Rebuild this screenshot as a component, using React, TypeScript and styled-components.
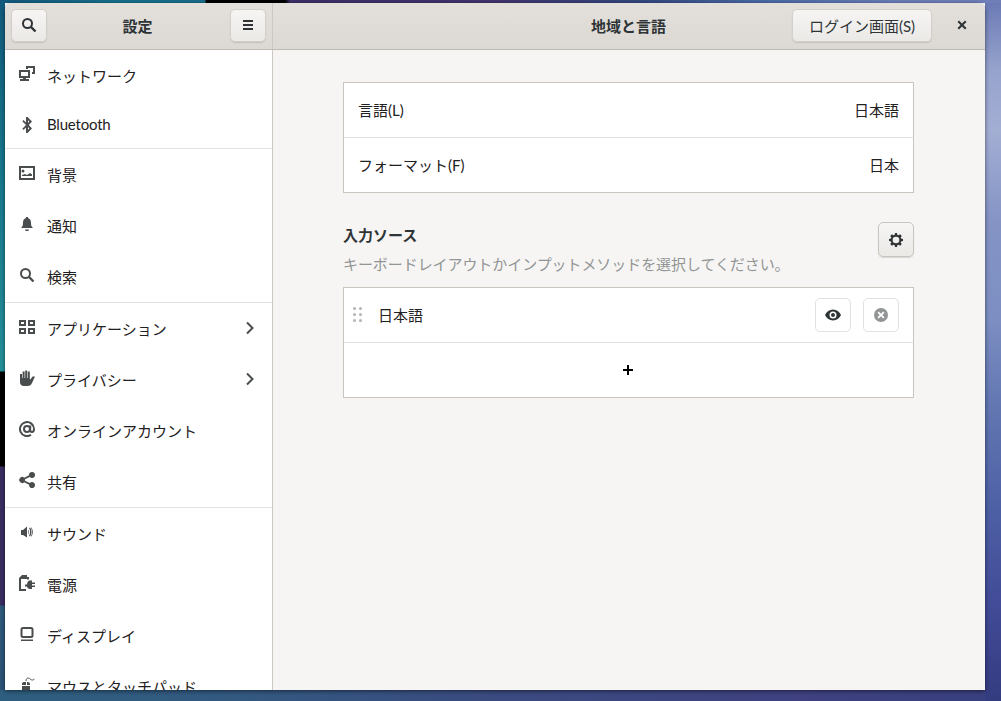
import React from 'react';
import styled, { createGlobalStyle } from 'styled-components';

const GlobalStyle = createGlobalStyle`
  html, body {
    margin: 0;
    padding: 0;
    overflow: hidden;
  }
  body {
    font-family: Lato, "Noto Sans CJK JP", sans-serif;
    font-size: 15px;
    color: #2e3436;
  }
`;

const Desktop = styled.div`
  box-sizing: border-box;
  width: 1001px;
  height: 701px;
  padding: 3px 16px 11px 5px;
  background:
    linear-gradient(90deg, #13597c 0, #17708c 120px, #1a6f8c 205px, #000 206px, #000 285px, #3d2f68 290px, #40356e 500px, #33477f 640px, #4a6aa6 760px, #6b7eb9 900px, #717fb8 1001px) top / 100% 3px no-repeat,
    linear-gradient(180deg, #6a79b4 0, #96a3cd 70px, #a3aed3 130px, #8594c5 220px, #7c8ec2 320px, #6478b3 400px, #4f62a6 500px, #424c98 600px, #343c80 701px) right / 16px 100% no-repeat,
    linear-gradient(90deg, #2e5e7f 0, #33587f 250px, #3a4a80 500px, #3f4180 800px, #38407f 1001px) bottom / 100% 11px no-repeat,
    linear-gradient(180deg, #125a7c 0, #187a8f 180px, #24919a 371px, #000 372px, #000 466px, #3a2d60 467px, #3a2d60 605px, #2f5a7d 606px, #2c5278 701px) left / 5px 100% no-repeat;
`;

const Window = styled.div`
  display: flex;
  flex-direction: column;
  height: 100%;
  overflow: hidden;
  border-radius: 8px 8px 0 0;
  background: #f6f5f4;
  box-shadow: 0 1px 4px rgba(0, 0, 0, 0.55);
`;

const TitleBar = styled.header`
  display: flex;
  flex: none;
  height: 46px;
  background: linear-gradient(180deg, #e3e0dc, #dcd9d5);
  border-bottom: 1px solid #bfb9b3;
`;

const SideHeader = styled.div`
  box-sizing: border-box;
  display: grid;
  grid-template-columns: 36px 1fr 36px;
  align-items: center;
  flex: none;
  width: 268px;
  padding: 0 6px 2px;
  border-right: 1px solid #cdc8c2;
`;

const MainHeader = styled.div`
  display: grid;
  grid-template-columns: 1fr auto 1fr;
  align-items: center;
  flex: 1;
  padding: 0 5px 2px 6px;
`;

const HeaderTitle = styled.h1`
  margin: 2px 2px 0 0;
  font-size: 15px;
  font-weight: 700;
  line-height: 20px;
  text-align: center;
  color: #2e3436;
`;

const HeaderEnd = styled.div`
  display: flex;
  justify-content: flex-end;
  align-items: center;
  gap: 12px;
`;

const ToolButton = styled.button<{ $wide?: boolean }>`
  box-sizing: border-box;
  display: flex;
  align-items: center;
  justify-content: center;
  width: ${(p) => (p.$wide ? '140px' : '36px')};
  height: 33px;
  padding: 0;
  border: 1px solid #d3cfca;
  border-radius: 5px;
  background: linear-gradient(180deg, #f6f5f4, #ebe9e6);
  box-shadow: 0 1px 1px rgba(0, 0, 0, 0.12);
  font: inherit;
  color: #2e3436;
`;

const CloseButton = styled.button`
  display: flex;
  align-items: center;
  justify-content: center;
  width: 36px;
  height: 33px;
  padding: 0;
  border: none;
  background: none;
  color: #2e3436;
`;

const Body = styled.div`
  display: flex;
  flex: 1;
  min-height: 0;
`;

const Sidebar = styled.nav`
  box-sizing: border-box;
  flex: none;
  width: 268px;
  overflow: hidden;
  background: #fff;
  border-right: 1px solid #cdc8c2;
`;

const NavGroup = styled.div`
  border-bottom: 1px solid #e4e3e1;
  &:last-child {
    border-bottom: none;
  }
`;

const NavRow = styled.div<{ $short?: boolean }>`
  display: flex;
  align-items: center;
  gap: 12px;
  height: ${(p) => (p.$short ? '47px' : '51px')};
  padding: 0 14px;
  color: #1f2122;
  line-height: 20px;
`;

const NavIcon = styled.svg<{ $short?: boolean }>`
  flex: none;
  width: 16px;
  height: 16px;
  margin-top: ${(p) => (p.$short ? '0' : '-3px')};
  fill: #4a4d4e;
  color: #4a4d4e;
`;

const NavLabel = styled.span<{ $short?: boolean }>`
  flex: 1;
  white-space: nowrap;
  margin-top: ${(p) => (p.$short ? '-2px' : '0')};
  letter-spacing: ${(p) => (p.$short ? '-0.2px' : '0')};
`;

const Chevron = styled.svg`
  flex: none;
  width: 16px;
  height: 16px;
  margin: -1px 0 0;
  fill: none;
  stroke: #4a4d4e;
  stroke-width: 2;
`;

const Content = styled.main`
  flex: 1;
  display: flex;
  flex-direction: column;
  padding: 32px 71px 0 70px;
`;

const ListBox = styled.div`
  background: #fff;
  border: 1px solid #c9c5be;
`;

const ListRow = styled.div`
  display: flex;
  align-items: center;
  justify-content: space-between;
  box-sizing: border-box;
  height: 55px;
  padding: 0 14px;
  line-height: 20px;
  color: #1f2122;
  border-bottom: 1px solid #e4e3e1;
  &:last-child {
    height: 54px;
    border-bottom: none;
  }
`;

const SourceRow = styled(ListRow)`
  justify-content: flex-start;
  padding: 0 14px 0 9px;
`;

const AddRow = styled(ListRow)`
  justify-content: center;
  padding: 0 15px 0 14px;
`;

const Section = styled.section`
  display: flex;
  justify-content: space-between;
  align-items: flex-start;
  margin: 29px 0 9px;
  height: 56px;
`;

const SectionTitle = styled.h2`
  margin: 3px 0 9px;
  font-size: 15px;
  font-weight: 700;
  line-height: 20px;
  color: #2e3436;
`;

const SectionHint = styled.p`
  margin: 0;
  font-size: 15px;
  line-height: 20px;
  letter-spacing: -0.07px;
  color: #929595;
`;

const GearButton = styled(ToolButton)`
  height: 35px;
  border-color: #c9c5be;
`;

const DragHandle = styled.div`
  display: grid;
  grid-template-columns: 3px 3px;
  grid-auto-rows: 3px;
  gap: 3px 3px;
  margin-right: 16px;
  margin-top: -2px;
`;

const Dot = styled.i`
  display: block;
  border-radius: 50%;
  background: #b4b4b4;
`;

const SourceName = styled.span`
  flex: 1;
`;

const RowButton = styled.button`
  box-sizing: border-box;
  display: flex;
  align-items: center;
  justify-content: center;
  width: 36px;
  height: 34px;
  margin-left: 12px;
  padding: 0;
  border: 1px solid #e3e2df;
  border-radius: 5px;
  background: #fff;
`;

const Glyph = styled.svg<{ $color?: string; $size?: number }>`
  width: ${(p) => p.$size ?? 16}px;
  height: ${(p) => p.$size ?? 16}px;
  fill: ${(p) => p.$color ?? '#2e3436'};
`;

const searchIcon = (
  <>
    <circle cx="6.500" cy="6.500" r="4.500" fill="none" stroke="currentColor" strokeWidth="2" />
    <path d="M10 10l4.500 4.500" fill="none" stroke="currentColor" strokeWidth="2.400" />
  </>
);

const icons = {
  network: (
    <>
      <path d="M7 0h9v8h-3V6h1V2H9v1H7z" />
      <path d="M0 4h11v8H7v1h3v2H1v-2h3v-1H0zm2 2v4h7V6z" />
    </>
  ),
  bluetooth: (
    <path d="M7 0h1.500L13 4.500 9.800 8l3.200 3.500L8.500 16H7v-5.500L4.500 13 3.300 11.700 7 8 3.300 4.300 4.500 3 7 5.500zm2 3.300v2.600l1.300-1.400zm0 6.800v2.600l1.300-1.200z" fillRule="evenodd" />
  ),
  background: (
    <path d="M0 1h16v14H0zm2 2v10h12V3zm2 1.500a1.500 1.500 0 1 1 0 3 1.500 1.500 0 0 1 0-3zM3 11v-1l3-1 2 1 3-2 2 1.500V11z" fillRule="evenodd" />
  ),
  bell: (
    <path d="M8 1c.8 0 1.300.5 1.400 1.200C11.500 3 12 4.800 12 7c0 2.500.6 3.500 2 5H2c1.400-1.500 2-2.500 2-5 0-2.200.5-4 2.600-4.800C6.700 1.500 7.200 1 8 1zM6 13.500h4c0 1-.9 1.500-2 1.500s-2-.5-2-1.500z" />
  ),
  search: searchIcon,
  apps: (
    <path d="M0 1h7v6H0zm2 2v2h3V3zm7-2h7v6H9zm2 2v2h3V3zM0 9h7v6H0zm2 2v2h3v-2zm7-2h7v6H9zm2 2v2h3v-2z" fillRule="evenodd" />
  ),
  hand: (
    <path d="M1 4h2v4h.6V1.500h2V8h.6V.5h2V8h.6V1.500h2V9l.6.500L13.500 6.500H16L13 13c-.8 2-2.200 3-4.500 3H5c-2.500 0-4-1.500-4-4z" />
  ),
  at: (
    <>
      <path d="M12 13.800A7 7 0 1 1 15 8c0 2-.8 3-2 3s-1.800-.8-1.800-2V4.500" fill="none" stroke="currentColor" strokeWidth="2" />
      <circle cx="8" cy="8" r="3" fill="none" stroke="currentColor" strokeWidth="2" />
    </>
  ),
  share: (
    <path d="M13 0a3 3 0 1 1-2.200 5L6 7.300a3 3 0 0 1 0 1.400l4.800 2.300A3 3 0 1 1 10 13v-.3L5.200 10.300a3 3 0 1 1 0-4.600L10 3.300V3a3 3 0 0 1 3-3z" />
  ),
  sound: (
    <>
      <path d="M2 6h2l4-3.500v11L4 11H2z" />
      <path d="M9 5.500c1 1.700 1 3.300 0 5zM11 3.500c2 2.900 2 6.100 0 9l-1-.6c1.500-2.600 1.500-5.200 0-7.800z" />
      <path d="M12.500 3.500c1.800 2.900 1.800 6.100 0 9l-.6-.3c1.500-2.800 1.500-5.600 0-8.400z" />
    </>
  ),
  power: (
    <>
      <path d="M3 0h5v2h2v2.500H8V4H2v10h5v2H0V3z" />
      <path d="M11 5.500h2v2h3v1.500h-3v1.500h3V12h-3v2h-2c-1.600 0-2.800-1-3-2.500H6v-2h2C8.200 7 9.400 5.500 11 5.500z" />
    </>
  ),
  display: (
    <path d="M4 1h8a2.500 2.500 0 0 1 2.500 2.500v6A2.500 2.500 0 0 1 12 12H4a2.500 2.500 0 0 1-2.500-2.500v-6A2.500 2.500 0 0 1 4 1zm0 2c-.3 0-.5.200-.5.500v6c0 .3.200.5.500.5h8c.3 0 .5-.2.500-.5v-6c0-.3-.2-.5-.5-.5zM2 13.500h12V15H2z" fillRule="evenodd" />
  ),
  mouse: (
    <>
      <path d="M5 5h2v3H3V7c0-1.200.8-2 2-2zM8 5h.5C9.800 5 11 5.800 11 7v1H8zM3 9h8v4c0 1.800-1.200 3-3 3H6c-1.800 0-3-1.200-3-3z" />
      <path d="M7 4c0-3 2-3.500 3.500-2.500S13 4 15.500 2" fill="none" stroke="#4a4d4e" strokeWidth="1" />
    </>
  ),
};

type IconName = keyof typeof icons;

interface NavItem {
  icon: IconName;
  label: string;
  arrow?: boolean;
  short?: boolean;
}

const groups: NavItem[][] = [
  [
    { icon: 'network', label: 'ネットワーク' },
    { icon: 'bluetooth', label: 'Bluetooth', short: true },
  ],
  [
    { icon: 'background', label: '背景' },
    { icon: 'bell', label: '通知' },
    { icon: 'search', label: '検索' },
  ],
  [
    { icon: 'apps', label: 'アプリケーション', arrow: true },
    { icon: 'hand', label: 'プライバシー', arrow: true },
    { icon: 'at', label: 'オンラインアカウント' },
    { icon: 'share', label: '共有' },
  ],
  [
    { icon: 'sound', label: 'サウンド' },
    { icon: 'power', label: '電源' },
    { icon: 'display', label: 'ディスプレイ' },
    { icon: 'mouse', label: 'マウスとタッチパッド' },
  ],
];

const App: React.FC = () => {
  return (
    <Desktop>
      <GlobalStyle />
      <Window>
        <TitleBar>
          <SideHeader>
            <ToolButton aria-label="検索">
              <Glyph viewBox="0 0 16 16">{searchIcon}</Glyph>
            </ToolButton>
            <HeaderTitle>設定</HeaderTitle>
            <ToolButton aria-label="メニュー">
              <Glyph viewBox="0 0 16 16">
                <path d="M3 3h10v2H3zm0 4h10v2H3zm0 4h10v2H3z" />
              </Glyph>
            </ToolButton>
          </SideHeader>
          <MainHeader>
            <span />
            <HeaderTitle>地域と言語</HeaderTitle>
            <HeaderEnd>
              <ToolButton $wide>ログイン画面(S)</ToolButton>
              <CloseButton aria-label="閉じる">
                <Glyph viewBox="0 0 16 16">
                  <path d="M5 3.500 8 6.500l3-3L12.500 5l-3 3 3 3-1.500 1.500-3-3-3 3L3.500 11l3-3-3-3z" />
                </Glyph>
              </CloseButton>
            </HeaderEnd>
          </MainHeader>
        </TitleBar>
        <Body>
          <Sidebar>
            {groups.map((group, i) => (
              <NavGroup key={i}>
                {group.map((item) => (
                  <NavRow key={item.label} $short={item.short}>
                    <NavIcon viewBox="0 0 16 16" $short={item.short}>
                      {icons[item.icon]}
                    </NavIcon>
                    <NavLabel $short={item.short}>{item.label}</NavLabel>
                    {item.arrow && (
                      <Chevron viewBox="0 0 16 16">
                        <path d="M5 2.500 10.500 8 5 13.500" />
                      </Chevron>
                    )}
                  </NavRow>
                ))}
              </NavGroup>
            ))}
          </Sidebar>
          <Content>
            <ListBox>
              <ListRow>
                <span>言語(L)</span>
                <span>日本語</span>
              </ListRow>
              <ListRow>
                <span>フォーマット(F)</span>
                <span>日本</span>
              </ListRow>
            </ListBox>
            <Section>
              <div>
                <SectionTitle>入力ソース</SectionTitle>
                <SectionHint>キーボードレイアウトかインプットメソッドを選択してください。</SectionHint>
              </div>
              <GearButton aria-label="設定">
                <Glyph viewBox="0 0 16 16" $size={14}>
                  <path
                    fillRule="evenodd"
                    d="M6.800 0h2.400l.4 2.200 1.300.5L12.700 1.400l1.900 1.900-1.300 1.800.5 1.300 2.200.4v2.400l-2.200.4-.5 1.300 1.300 1.800-1.900 1.900-1.800-1.300-1.300.5-.4 2.200H6.800l-.4-2.200-1.300-.5-1.800 1.300-1.900-1.900 1.300-1.800-.5-1.300L0 9.200V6.800l2.200-.4.5-1.300L1.400 3.300l1.900-1.900 1.800 1.300 1.300-.5zM8 4.200a3.800 3.800 0 1 0 0 7.600 3.800 3.800 0 0 0 0-7.600z"
                  />
                </Glyph>
              </GearButton>
            </Section>
            <ListBox>
              <SourceRow>
                <DragHandle>
                  {Array.from({ length: 6 }).map((_, i) => (
                    <Dot key={i} />
                  ))}
                </DragHandle>
                <SourceName>日本語</SourceName>
                <RowButton aria-label="表示">
                  <Glyph viewBox="0 0 16 16">
                    <path
                      fillRule="evenodd"
                      d="M8 2.500c3.600 0 6.400 2.200 8 5.500-1.600 3.300-4.400 5.500-8 5.500S1.600 11.300 0 8c1.600-3.300 4.400-5.500 8-5.500zm0 2a3.500 3.500 0 1 0 0 7 3.500 3.500 0 0 0 0-7zM8 6a2 2 0 1 1 0 4 2 2 0 0 1 0-4z"
                    />
                  </Glyph>
                </RowButton>
                <RowButton aria-label="削除">
                  <Glyph viewBox="0 0 16 16" $color="#929595">
                    <path
                      fillRule="evenodd"
                      d="M8 1a7 7 0 1 1 0 14A7 7 0 0 1 8 1zM5.800 4.500 4.500 5.800 6.700 8l-2.200 2.200 1.300 1.300L8 9.300l2.200 2.200 1.300-1.300L9.300 8l2.200-2.200-1.300-1.300L8 6.700z"
                    />
                  </Glyph>
                </RowButton>
              </SourceRow>
              <AddRow>
                <Glyph viewBox="0 0 16 16" $color="#000">
                  <path d="M7 3h2v4h4v2H9v4H7V9H3V7h4z" />
                </Glyph>
              </AddRow>
            </ListBox>
          </Content>
        </Body>
      </Window>
    </Desktop>
  );
};

export default App;
